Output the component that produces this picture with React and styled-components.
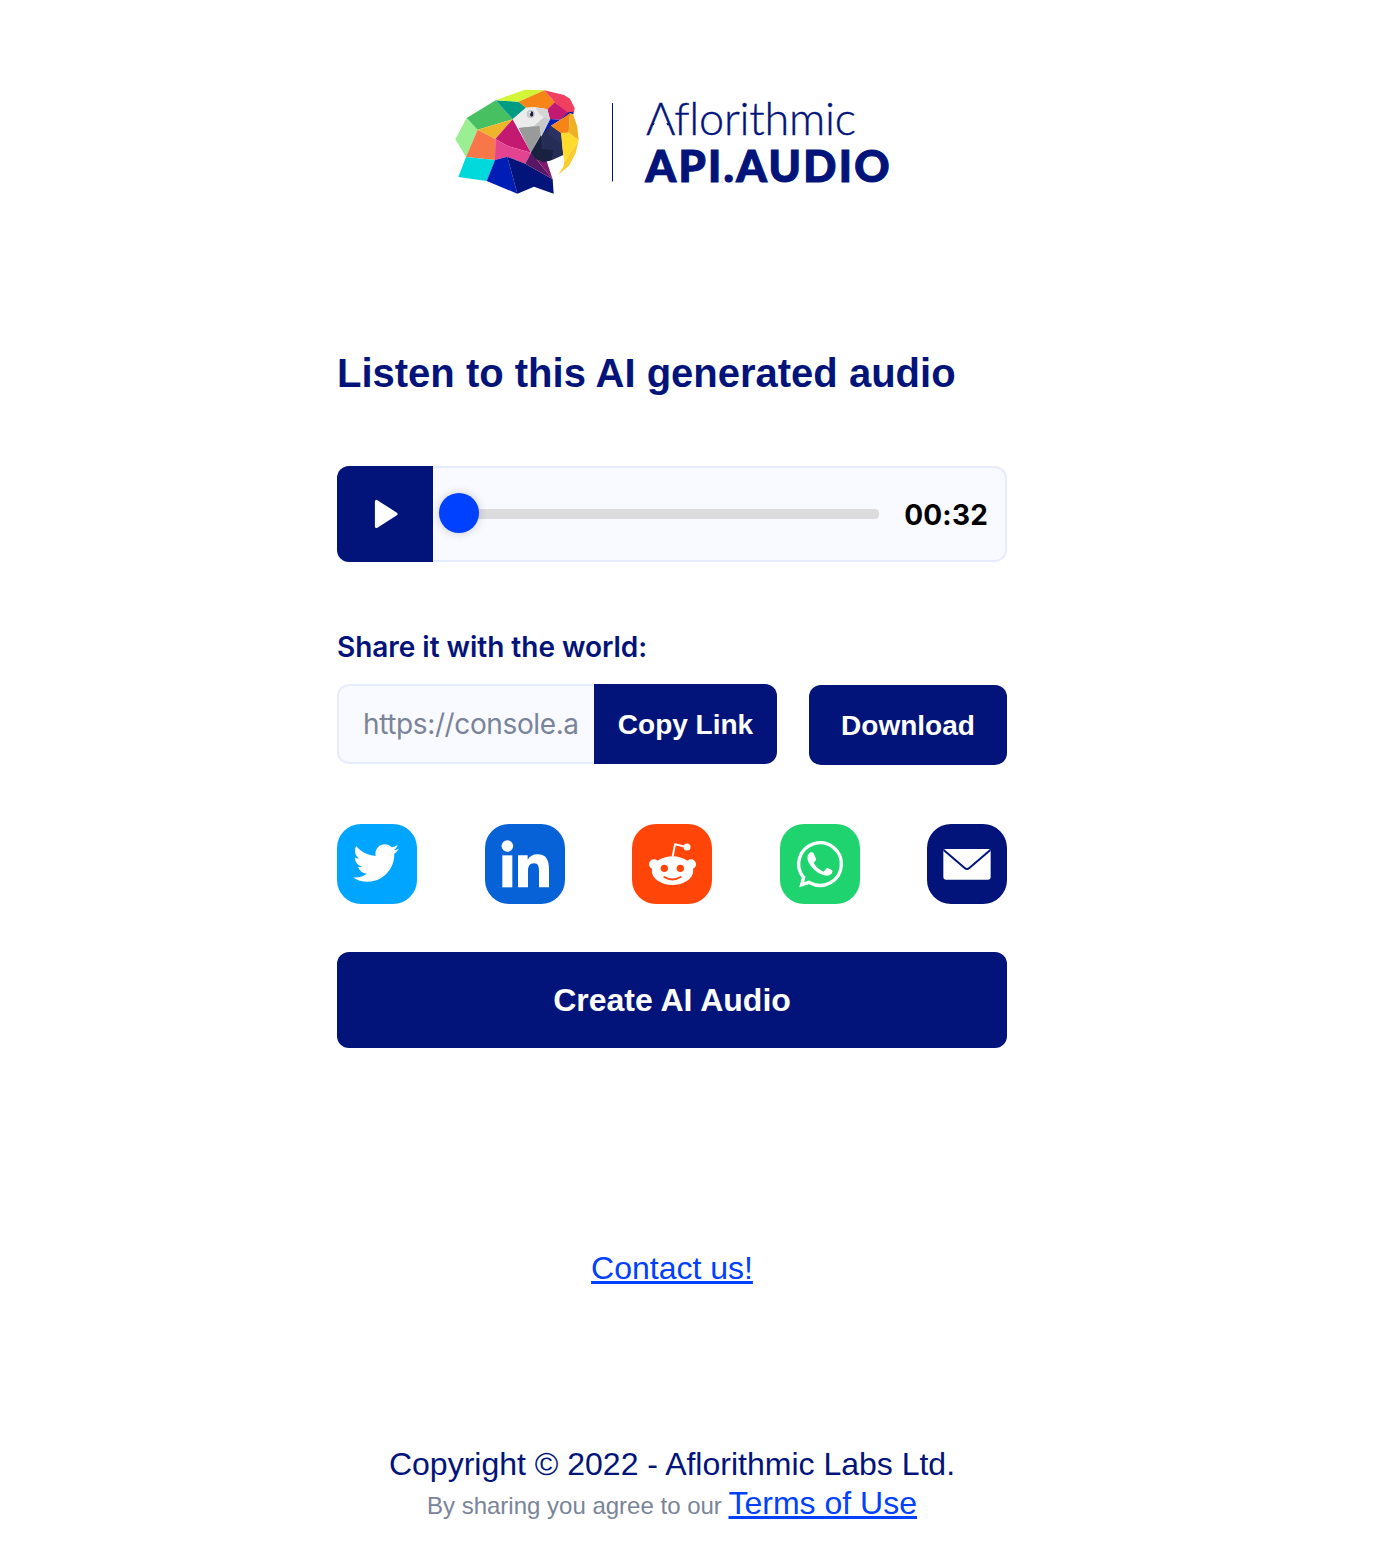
import React from "react";
import styled, { createGlobalStyle } from "styled-components";
import { FaTwitter } from "react-icons/fa";

const NAVY = "#02147a";
const BLUE = "#0041ff";

const GlobalStyle = createGlobalStyle`
  *, *::before, *::after { box-sizing: border-box; }
  body { margin: 0; background: #fff; }
`;

const Page = styled.main`
  width: 1344px;
  min-height: 1548px;
  display: flex;
  flex-direction: column;
  align-items: center;
  color: ${NAVY};
  font-family: "Liberation Sans", Arial, sans-serif;
`;

const Header = styled.header`
  width: 670px;
  padding: 80px 0 0 108px;
  height: 349px;
`;

const Column = styled.section`
  width: 670px;
  display: flex;
  flex-direction: column;
`;

const Title = styled.h1`
  margin: 0 0 69px;
  font-size: 40px;
  line-height: 48px;
  font-weight: 700;
  white-space: nowrap;
`;

const Player = styled.div`
  display: flex;
  height: 96px;
  border-radius: 12px;
  overflow: hidden;
`;

const PlayButton = styled.button`
  width: 96px;
  flex: none;
  border: 0;
  padding: 0 0 0 2px;
  background: ${NAVY};
  display: flex;
  align-items: center;
  justify-content: center;
`;

const PlayerBody = styled.div`
  flex: 1;
  display: flex;
  align-items: center;
  border: 2px solid #e6ebff;
  border-left: 0;
  border-radius: 0 12px 12px 0;
  background: #f9faff;
  padding: 0 17px 0 6px;
`;

const Track = styled.div`
  width: 440px;
  height: 10px;
  border-radius: 4px;
  background: #dcdcdc;
  display: flex;
  align-items: center;
`;

const Thumb = styled.span`
  width: 40px;
  height: 40px;
  margin-top: -2px;
  flex: none;
  border-radius: 50%;
  background: ${BLUE};
  box-shadow: 0 0 10px rgba(0, 0, 0, 0.2);
`;

const Time = styled.span`
  margin-left: auto;
  padding-top: 1px;
  font: 700 28px/36px Inter, sans-serif;
  letter-spacing: 0.2px;
  color: #000;
`;

const Label = styled.h2`
  margin: 67px 0 19px;
  font: 600 28px/36px Inter, sans-serif;
  letter-spacing: -0.03px;
  white-space: nowrap;
`;

const ShareRow = styled.div`
  display: flex;
  justify-content: space-between;
  align-items: flex-start;
  height: 81px;
`;

const CopyGroup = styled.div`
  width: 440px;
  height: 80px;
  display: flex;
`;

const LinkField = styled.div`
  flex: 1;
  min-width: 0;
  border: 2px solid #e6ebff;
  border-right: 0;
  border-radius: 12px 0 0 12px;
  background: #f9faff;
  color: #7a8499;
  padding: 0 14px 0 24px;
  font: 400 28px/76px Inter, sans-serif;
  letter-spacing: -0.38px;
  white-space: nowrap;
  overflow: hidden;
`;

const Button = styled.button`
  border: 0;
  padding: ${(p) => p.$nudge || "0"} 0 0;
  width: ${(p) => p.$width || "100%"};
  height: ${(p) => p.$height || "80px"};
  margin-top: ${(p) => p.$top || "0"};
  flex: none;
  border-radius: ${(p) => (p.$attached ? "0 12px 12px 0" : "12px")};
  background: ${NAVY};
  color: #fff;
  font: 700 ${(p) => p.$size || "28px"} "Liberation Sans", Arial, sans-serif;
`;

const Socials = styled.nav`
  display: flex;
  justify-content: space-between;
  margin: 59px 0 48px;
`;

const Social = styled.a`
  width: 80px;
  height: 80px;
  border-radius: 24px;
  background: ${(p) => p.$color};
  color: #fff;
  display: flex;
  align-items: center;
  justify-content: center;
  padding: ${(p) => p.$inset || "0"};
  svg { display: block; }
`;

const Link = styled.a`
  color: ${BLUE};
  font-size: 32px;
  text-decoration: underline;
`;

const Contact = styled.div`
  margin-top: 200px;
  font-size: 32px;
  line-height: 40px;
`;

const Footer = styled.footer`
  margin-top: 157px;
  text-align: center;
  font-size: 32px;
  line-height: 39px;
  p { margin: 0; }
`;

const Small = styled.span`
  font-size: 24px;
  color: #7a8499;
`;

const Wordmark = styled.text`
  fill: ${NAVY};
  stroke: ${NAVY};
  font-family: Lato, sans-serif;
  font-weight: ${(p) => p.$weight};
  font-size: ${(p) => p.$size}px;
  font-variant-ligatures: none;
`;

const FACETS = [
  ["#99ef92", "65,114 98,149 63,231 31,178"],
  ["#46c060", "65,114 152,61 203,118 98,149"],
  ["#009b83", "152,61 221,65 243,83 203,118"],
  ["#d3f538", "152,61 240,29 298,31 221,65"],
  ["#f58516", "221,65 298,31 329,67 307,88 270,82 243,83"],
  ["#f04060", "298,31 357,45 375,56 389,84 387,98 368,99 329,67"],
  ["#c41971", "329,67 370,98 345,119 313,117 307,88"],
  ["#efb52a", "98,149 203,118 151,177"],
  ["#f87749", "98,149 151,177 150,240 63,231"],
  ["#c41971", "203,118 258,218 190,199 151,177"],
  ["#e3438f", "151,177 190,199 258,218 241,251 187,230 150,240"],
  ["#00d9dc", "63,231 150,240 125,303 40,291"],
  ["#001eb5", "150,240 187,230 217,341 125,303"],
  ["#02147a", "187,230 241,251 323,298 326,341 267,320 217,341"],
  ["#591763", "258,218 323,298 241,251"],
  ["#83196c", "258,218 284,243 305,244 323,298"],
  ["#ebebec", "203,118 243,83 270,82 307,88 315,118 285,138 221,144"],
  ["#d5d5d6", "270,82 307,88 315,118 297,112 284,103"],
  ["#999b9b", "221,144 283,137 288,166 258,218"],
  ["#c7c8c9", "297,112 315,118 293,161 284,170 258,218 285,150 266,139"],
  ["#999b9b", "221,144 284,138 286,164 258,218"],
  ["#001eb5", "293,162 316,117 345,119 370,97 384,95 386,102 350,117 318,137 301,163"],
  ["#252d57", "318,137 348,159 355,225 323,239 296,247 272,237 258,218 293,162"],
  ["#2b3262", "318,137 348,159 351,192 308,163"],
  ["#192040", "288,165 290,207 324,211 320,240 296,247 272,237 258,218"],
  ["#f58516", "375,99 371,158 348,159 318,137 350,117"],
  ["#efb024", "375,99 384,102 397,140 401,181 371,158"],
  ["#ffdb2c", "348,159 371,158 401,181 358,247 355,225"],
  ["#fbcc2e", "401,181 392,220 372,257 340,284 355,260 358,247"],
];

function Logo() {
  return (
    <svg width="450" height="125" viewBox="445 80 450 125" aria-label="Aflorithmic API.AUDIO">
      <g transform="translate(445 80) scale(.33333)">
        {FACETS.map(([fill, points], i) => (
          <polygon key={i} points={points} fill={fill} />
        ))}
        <circle cx="257" cy="102" r="12" fill="#c7c8c9" />
        <ellipse cx="260" cy="102" rx="5" ry="8" fill="#192040" />
        <circle cx="255" cy="98" r="2.5" fill="#fff" />
      </g>
      <path d="M612.5 103V181.500" stroke={NAVY} strokeWidth="1" />
      <Wordmark x="646" y="135.300" $weight={300} $size={45} textLength="210" strokeWidth="0.4">
        Aflorithmic
      </Wordmark>
      <polygon points="655.2,121.3 665.8,121.3 667.4,126 653.6,126" fill="#fff" />
      <Wordmark x="645.500" y="181.700" $weight={900} $size={43.5} textLength="244" strokeWidth="1.2">
        API.AUDIO
      </Wordmark>
    </svg>
  );
}

function PlayIcon() {
  return (
    <svg width="24" height="30" viewBox="0 0 24 30">
      <path d="M2.500 2.500V27.500L22 15Z" fill="#fff" stroke="#fff" strokeWidth="3.200" strokeLinejoin="round" />
    </svg>
  );
}

function LinkedinIcon() {
  return (
    <svg width="80" height="80" viewBox="0 0 240 240" fill="#fff">
      <circle cx="67" cy="66" r="17.500" />
      <path d="M52 94H82V190H52Z" />
      <path d="M99 94H128V107C134 97 144 91 157 91C184 91 192 108 192 137V190H162V143C162 128 160 118 147 118C133 118 129 128 129 142V190H99Z" />
    </svg>
  );
}

function RedditIcon() {
  return (
    <svg width="80" height="80" viewBox="0 0 240 240">
      <path d="M122 98L129 61L160 68" fill="none" stroke="#fff" strokeWidth="6" strokeLinejoin="round" />
      <g fill="#fff">
        <circle cx="165" cy="69" r="10.500" />
        <circle cx="66" cy="121" r="15" />
        <circle cx="177" cy="121" r="15" />
        <ellipse cx="121.500" cy="140" rx="62" ry="43" />
      </g>
      <g fill="#ff4508">
        <circle cx="97" cy="133" r="11" />
        <circle cx="145" cy="133" r="11" />
      </g>
      <path d="M97 159Q121 174 146 159" fill="none" stroke="#ff4508" strokeWidth="6" strokeLinecap="round" />
    </svg>
  );
}

function WhatsappIcon() {
  return (
    <svg width="80" height="80" viewBox="0 0 240 240">
      <path
        d="M65 182L72 156L69.500 159.300A64 64 0 1 1 91 177.100L87 175Z"
        fill="none"
        stroke="#fff"
        strokeWidth="10"
        strokeLinejoin="miter"
      />
      <path
        d="M89 86C93 84 98 84 101 88L108 104C109 108 106 111 101 116C107 128 117 137 131 143C136 138 138 132 143 132L156 138C159 140 157 148 153 151C146 157 134 155 124 151C106 143 92 128 85 113C80 101 83 91 89 86Z"
        fill="#fff"
      />
    </svg>
  );
}

function MailIcon() {
  return (
    <svg width="80" height="80" viewBox="0 0 240 240">
      <path d="M55 75H185Q191 75 191 81V158Q191 167 182 167H58Q49 167 49 158V81Q49 75 55 75Z" fill="#fff" />
      <path d="M50 78L113 132Q120 138 127 132L190 78" fill="none" stroke={NAVY} strokeWidth="6" />
    </svg>
  );
}

export default function App() {
  return (
    <>
      <GlobalStyle />
      <Page>
        <Header>
          <Logo />
        </Header>
        <Column>
          <Title>Listen to this AI generated audio</Title>
          <Player>
            <PlayButton aria-label="Play">
              <PlayIcon />
            </PlayButton>
            <PlayerBody>
              <Track>
                <Thumb />
              </Track>
              <Time>00:32</Time>
            </PlayerBody>
          </Player>
          <Label>Share it with the world:</Label>
          <ShareRow>
            <CopyGroup>
              <LinkField>https://console.a</LinkField>
              <Button $width="183px" $nudge="2px" $attached>Copy Link</Button>
            </CopyGroup>
            <Button $width="198px" $nudge="2px" $top="1px">Download</Button>
          </ShareRow>
          <Socials>
            <Social $color="#00a5ff" $inset="0 2px 2px 0" aria-label="Twitter">
              <FaTwitter size={46} />
            </Social>
            <Social $color="#0762d7" aria-label="LinkedIn">
              <LinkedinIcon />
            </Social>
            <Social $color="#ff4508" aria-label="Reddit">
              <RedditIcon />
            </Social>
            <Social $color="#1fd46e" aria-label="WhatsApp">
              <WhatsappIcon />
            </Social>
            <Social $color={NAVY} aria-label="Email">
              <MailIcon />
            </Social>
          </Socials>
          <Button $height="96px" $size="32px">Create AI Audio</Button>
        </Column>
        <Contact>
          <Link>Contact us!</Link>
        </Contact>
        <Footer>
          <p>Copyright © 2022 - Aflorithmic Labs Ltd.</p>
          <p>
            <Small>By sharing you agree to our </Small>
            <Link>Terms of Use</Link>
          </p>
        </Footer>
      </Page>
    </>
  );
}
